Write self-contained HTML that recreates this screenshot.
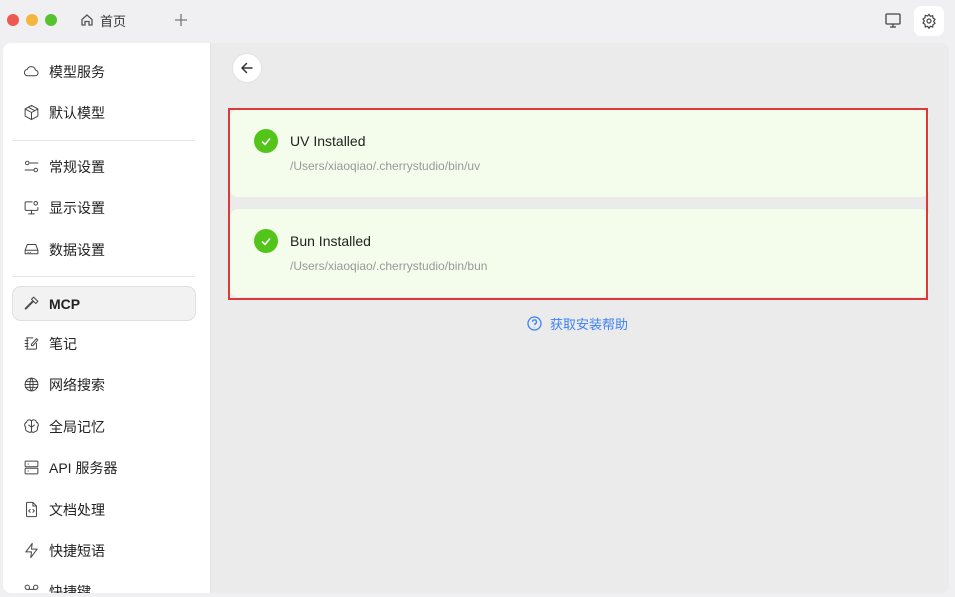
<!DOCTYPE html>
<html><head><meta charset="utf-8"><style>
*{margin:0;padding:0;box-sizing:border-box}
body{width:955px;height:597px;background:#f0eff2;font-family:"Liberation Sans","Noto Sans CJK SC",sans-serif;position:relative;overflow:hidden;color:#222}
.dot{position:absolute;top:14px;width:12px;height:12px;border-radius:50%}
.main{position:absolute;left:3px;top:43px;width:946px;height:550px;border-radius:8px;overflow:hidden;background:#ebebeb}
.side{position:absolute;left:0;top:0;width:208px;height:550px;background:#fff;border-right:1px solid #e4e4e4}
.it{position:absolute;left:9px;width:184px;height:35px;display:flex;align-items:center;font-size:14px;color:#222}
.it svg{position:absolute;left:11px;width:17px;height:17px;fill:none;stroke:#444;stroke-width:1.4;stroke-linecap:round;stroke-linejoin:round}
.it span{position:absolute;left:37px}
.hr{position:absolute;left:9px;width:183px;height:1px;background:#e6e6e6}
.card{position:absolute;left:227px;width:699px;background:#f4fdec;border-radius:8px}
.ck{position:absolute;left:24px;width:24px;height:24px;border-radius:50%;background:#52c41a}
.t{position:absolute;left:60px;font-size:14px;color:#222}
.p{position:absolute;left:60px;font-size:12px;color:#999}
</style></head><body>
<div class="dot" style="left:7px;background:#ee5a52"></div>
<div class="dot" style="left:26px;background:#f4b63f"></div>
<div class="dot" style="left:45px;background:#56c22d"></div>
<svg style="position:absolute;left:80px;top:13px" width="14" height="14" viewBox="0 0 14 14" fill="none" stroke="#555" stroke-width="1.3"><path d="M2 6.5L7 2l5 4.5V12H9V8.5H5V12H2z"/></svg>
<div style="position:absolute;left:100px;top:11px;font-size:13px;color:#333">首页</div>
<svg style="position:absolute;left:174px;top:13px" width="14" height="14" stroke="#777" stroke-width="1.3"><path d="M7 1v12M1 7h12"/></svg>
<svg style="position:absolute;left:885px;top:13px" width="16" height="15" fill="none" stroke="#444" stroke-width="1.3"><rect x="1" y="1" width="14" height="10" rx="1"/><path d="M8 11v3M5 14h6"/></svg>
<div style="position:absolute;left:914px;top:6px;width:30px;height:30px;background:#fff;border-radius:7px"></div>
<svg style="position:absolute;left:921px;top:13px" width="16" height="16" viewBox="0 0 24 24" fill="none" stroke="#444" stroke-width="1.8"><circle cx="12" cy="12" r="3"/><path d="M12 2l2 3 3.5-1 .5 3.5 3 2-2 3 2 3-3 2-.5 3.5-3.5-1-2 3-2-3-3.5 1L6 17l-3-2 2-3-2-3 3-2 .5-3.5 3.5 1z"/></svg>
<div class="main">
<div class="side">
<div class="it" style="top:11px"><svg viewBox="0 0 24 24"><path d="M7 18h10a4 4 0 0 0 .5-8A6 6 0 0 0 6 9a4.5 4.5 0 0 0 1 9z"/></svg><span>模型服务</span></div>
<div class="it" style="top:52px"><svg viewBox="0 0 24 24"><path d="M12 2l9 5v10l-9 5-9-5V7zM3 7l9 5 9-5M12 12v10M7.5 4.5l9 5"/></svg><span>默认模型</span></div>
<div class="hr" style="top:97px"></div>
<div class="it" style="top:106px"><svg viewBox="0 0 24 24"><circle cx="6" cy="7" r="2.5"/><circle cx="18" cy="17" r="2.5"/><path d="M10 7h11M3 17h12"/></svg><span>常规设置</span></div>
<div class="it" style="top:147px"><svg viewBox="0 0 24 24"><path d="M13 4H4a1 1 0 0 0-1 1v10a1 1 0 0 0 1 1h16a1 1 0 0 0 1-1v-3M12 16v5M8 21h8"/><circle cx="18" cy="6" r="2.5"/></svg><span>显示设置</span></div>
<div class="it" style="top:189px"><svg viewBox="0 0 24 24"><path d="M3 13l3-8h12l3 8v5H3zM3 13h18M7 16h.5M10 16h.5"/></svg><span>数据设置</span></div>
<div class="hr" style="top:233px"></div>
<div class="it" style="top:243px;background:#f2f2f2;border:1px solid #e0e0e0;border-radius:9px"><svg viewBox="0 0 24 24" style="left:10px"><path d="M14 10L4 20l-1-1 10-10M12 6l6 6 3-3-6-6z"/></svg><span style="left:36px;font-weight:bold;font-size:14px">MCP</span></div>
<div class="it" style="top:283px"><svg viewBox="0 0 24 24"><path d="M5 4h9M5 20h13a1 1 0 0 0 1-1v-7M3 8h4M3 12h4M3 16h4M6 4v16M12 13l7-8 2 2-7 8h-2z"/></svg><span>笔记</span></div>
<div class="it" style="top:324px"><svg viewBox="0 0 24 24"><circle cx="12" cy="12" r="9"/><path d="M3 12h18M3.5 8h17M3.5 16h17M12 3c-3 3-3 15 0 18M12 3c3 3 3 15 0 18"/></svg><span>网络搜索</span></div>
<div class="it" style="top:366px"><svg viewBox="0 0 24 24"><path d="M12 4a4 4 0 0 0-7 2 4 4 0 0 0-1 7 4 4 0 0 0 3 6 3 3 0 0 0 5 0 3 3 0 0 0 5 0 4 4 0 0 0 3-6 4 4 0 0 0-1-7 4 4 0 0 0-7-2zM12 4v16M8 10l4 3 4-3"/></svg><span>全局记忆</span></div>
<div class="it" style="top:407px"><svg viewBox="0 0 24 24"><rect x="3" y="3" width="18" height="8" rx="1"/><rect x="3" y="13" width="18" height="8" rx="1"/><path d="M7 7h.5M7 17h.5"/></svg><span>API 服务器</span></div>
<div class="it" style="top:449px"><svg viewBox="0 0 24 24"><path d="M14 2H6a1 1 0 0 0-1 1v18a1 1 0 0 0 1 1h12a1 1 0 0 0 1-1V7zM14 2v5h5M10 12l-2 2 2 2M14 12l2 2-2 2"/></svg><span>文档处理</span></div>
<div class="it" style="top:490px"><svg viewBox="0 0 24 24"><path d="M13 2L4 14h8l-1 8 9-12h-8z"/></svg><span>快捷短语</span></div>
<div class="it" style="top:531px"><svg viewBox="0 0 24 24"><path d="M9 9V6a3 3 0 1 0-3 3h12a3 3 0 1 0-3-3v3"/></svg><span>快捷键</span></div>
</div>
<div style="position:absolute;left:229px;top:10px;width:30px;height:30px;border-radius:50%;background:#fff;border:1px solid #e2e2e2"></div>
<svg style="position:absolute;left:237px;top:18px" width="14" height="14" fill="none" stroke="#333" stroke-width="1.5" stroke-linecap="round" stroke-linejoin="round"><path d="M12 7H2M6.5 2.5L2 7l4.5 4.5"/></svg>
<div class="card" style="top:66px;height:88px"><div class="ck" style="top:20px"></div><svg style="position:absolute;left:30px;top:26px" width="12" height="12" fill="none" stroke="#fff" stroke-width="1.6"><path d="M2 6.5l3 3 5-6"/></svg><div class="t" style="top:24px">UV Installed</div><div class="p" style="top:50px">/Users/xiaoqiao/.cherrystudio/bin/uv</div></div>
<div class="card" style="top:166px;height:88px"><div class="ck" style="top:20px"></div><svg style="position:absolute;left:30px;top:26px" width="12" height="12" fill="none" stroke="#fff" stroke-width="1.6"><path d="M2 6.5l3 3 5-6"/></svg><div class="t" style="top:24px">Bun Installed</div><div class="p" style="top:50px">/Users/xiaoqiao/.cherrystudio/bin/bun</div></div>
<div style="position:absolute;left:225px;top:65px;width:700px;height:192px;border:2px solid #dc3a3a"></div>
<svg style="position:absolute;left:524px;top:273px" width="15" height="15" fill="none" stroke="#3b82f6" stroke-width="1.3"><circle cx="7.5" cy="7.5" r="6.5"/><path d="M5.5 5.8a2 2 0 1 1 2.5 2v1.3M7.5 11v.3"/></svg>
<div style="position:absolute;left:547px;top:271px;font-size:13px;color:#3b82f6">获取安装帮助</div>
</div>
</body></html>
